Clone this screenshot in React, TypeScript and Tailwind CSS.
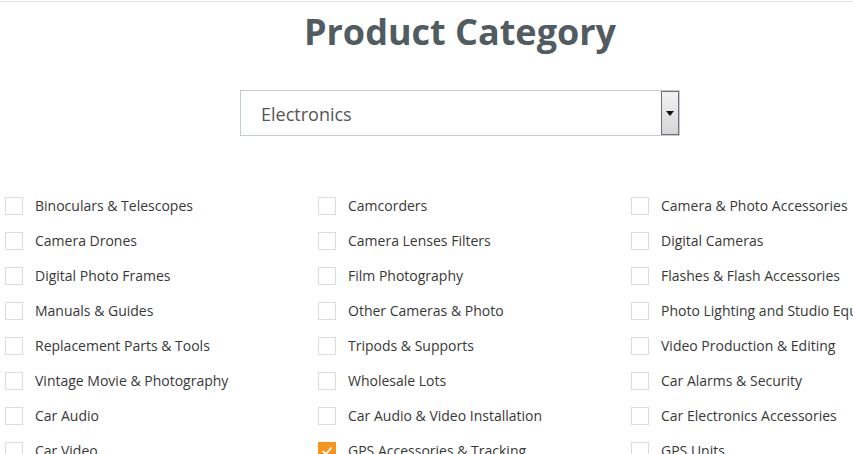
import React from "react"

type Item = { label: string; checked?: boolean }

const columns: Item[][] = [
  [
    { label: "Binoculars & Telescopes" },
    { label: "Camera Drones" },
    { label: "Digital Photo Frames" },
    { label: "Manuals & Guides" },
    { label: "Replacement Parts & Tools" },
    { label: "Vintage Movie & Photography" },
    { label: "Car Audio" },
    { label: "Car Video" },
  ],
  [
    { label: "Camcorders" },
    { label: "Camera Lenses Filters" },
    { label: "Film Photography" },
    { label: "Other Cameras & Photo" },
    { label: "Tripods & Supports" },
    { label: "Wholesale Lots" },
    { label: "Car Audio & Video Installation" },
    { label: "GPS Accessories & Tracking", checked: true },
  ],
  [
    { label: "Camera & Photo Accessories" },
    { label: "Digital Cameras" },
    { label: "Flashes & Flash Accessories" },
    { label: "Photo Lighting and Studio Equipment" },
    { label: "Video Production & Editing" },
    { label: "Car Alarms & Security" },
    { label: "Car Electronics Accessories" },
    { label: "GPS Units" },
  ],
]

const Checkbox = ({ checked }: { checked?: boolean }) =>
  checked ? (
    <span className="w-[18px] h-[18px] shrink-0 bg-[#f7941d] flex items-center justify-center">
      <svg width="12" height="12" viewBox="0 0 12 12" fill="none">
        <path d="M2 6.5 L5 9 L10 3" stroke="white" strokeWidth="1.8" strokeLinecap="round" strokeLinejoin="round" />
      </svg>
    </span>
  ) : (
    <span className="w-[18px] h-[18px] shrink-0 bg-white border border-[#dcdcdc]" />
  )

export default function App() {
  return (
    <div className="w-[853px] h-[454px] overflow-hidden bg-white font-['Open_Sans',sans-serif] pt-px">
      <div className="h-px bg-[#e3e3e3]" />
      <div className="w-[920px]">
        <h1 className="mt-[8px] text-center text-[36px] leading-[44px] font-bold text-[#505b62]">
          Product Category
        </h1>
        <div className="mt-[36px] mx-auto w-[440px] h-[46px] border border-[#c3ccd6] bg-white flex items-center justify-between pl-5">
          <span className="text-[18px] text-[#555] pt-[3px]">Electronics</span>
          <div className="w-[18px] h-[44px] border border-[#707070] bg-gradient-to-b from-[#f2f2f2] to-[#d6d6d6] flex items-center justify-center">
            <svg width="8" height="5" viewBox="0 0 8 5">
              <path d="M0 0 H8 L4 5 Z" fill="#111" />
            </svg>
          </div>
        </div>
        <div className="mt-[52px] pl-[5px] flex">
          {columns.map((col, ci) => (
            <div key={ci} className="w-[313px] shrink-0 flex flex-col">
              {col.map((item) => (
                <label key={item.label} className="h-[35px] flex items-center gap-[12px] whitespace-nowrap">
                  <Checkbox checked={item.checked} />
                  <span className="text-[14px] text-[#383838]">{item.label}</span>
                </label>
              ))}
            </div>
          ))}
        </div>
      </div>
    </div>
  )
}
